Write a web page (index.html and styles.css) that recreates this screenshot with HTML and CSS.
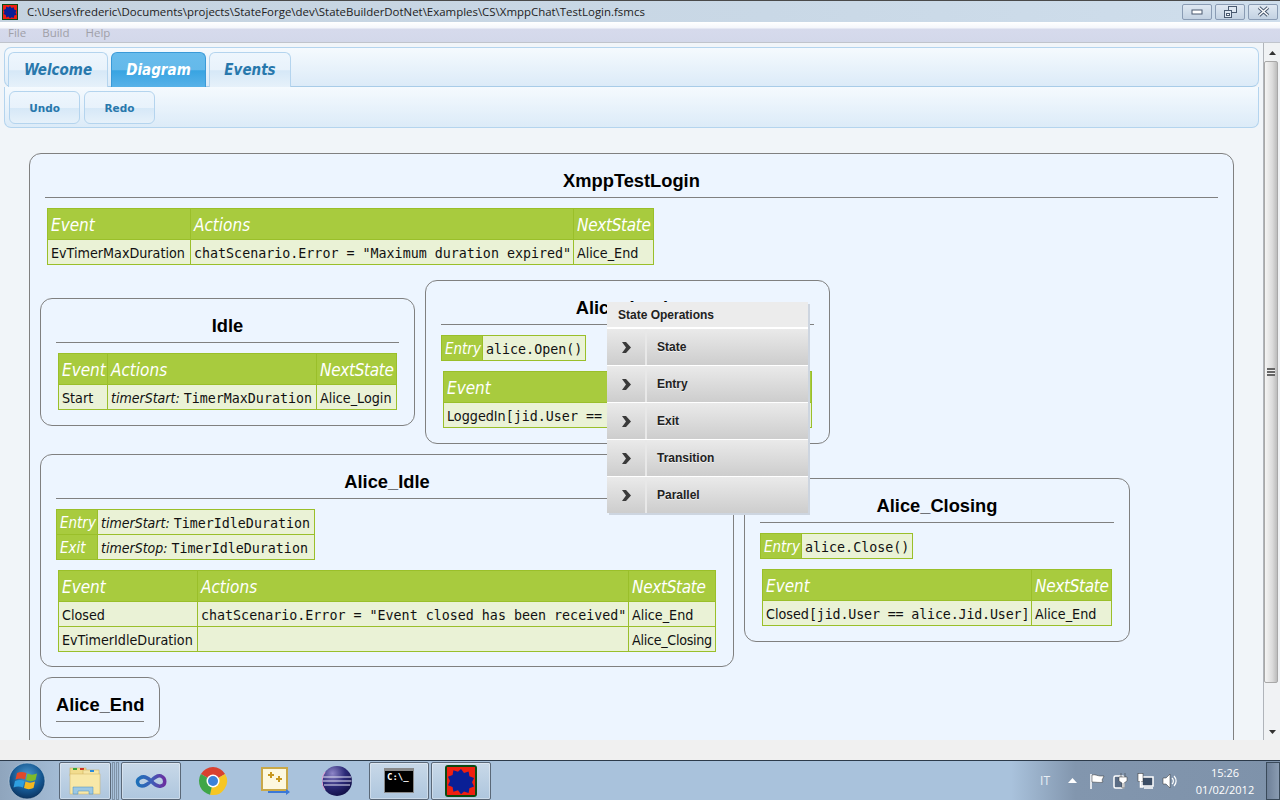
FILE: index.html
```html
<!DOCTYPE html>
<html lang="en">
<head>
    <meta charset="UTF-8">
    <title>StateForge</title>
    <link rel="stylesheet" href="styles.css">
</head>
<body>
    <div class="titlebar">
        <svg class="app-icon" width="16" height="16" viewBox="0 0 16 16">
            <rect width="16" height="16" fill="#0c4a12"/>
            <rect x="1" y="1" width="14" height="14" fill="#f02010"/>
            <path d="M8 2l1.500 2 2.300-.8.4 2.400 2.300.9-1 2.100 1 2.100-2.300.9-.4 2.400-2.300-.8L8 14.600l-1.500-2-2.300.8-.4-2.400-2.300-.9 1-2.100-1-2.100 2.300-.9.4-2.400 2.300.8z" fill="#0a1f96"/>
        </svg>
        <span class="title-text">C:\Users\frederic\Documents\projects\StateForge\dev\StateBuilderDotNet\Examples\CS\XmppChat\TestLogin.fsmcs</span>
        <div class="win-buttons">
            <div class="win-btn">
                <svg width="12" height="8" viewBox="0 0 12 8"><rect x="1" y="2" width="10" height="4" fill="#fff" stroke="#4a5a70"/></svg>
            </div>
            <div class="win-btn">
                <svg width="13" height="12" viewBox="0 0 13 12"><rect x="4.500" y="0.500" width="8" height="6" fill="#dfe8f2" stroke="#4a5a70"/><rect x="0.500" y="4.500" width="7" height="7" fill="#dfe8f2" stroke="#4a5a70"/><rect x="2.500" y="7.500" width="3" height="2" fill="#fff" stroke="#4a5a70"/></svg>
            </div>
            <div class="win-btn">
                <svg width="13" height="11" viewBox="0 0 13 11"><path d="M2 1.500l9 8M11 1.500l-9 8" stroke="#4a5a70" stroke-width="3.500" fill="none"/><path d="M2 1.500l9 8M11 1.500l-9 8" stroke="#fff" stroke-width="1.500" fill="none"/></svg>
            </div>
        </div>
    </div>
    <div class="menubar">
        <span>File</span>
        <span>Build</span>
        <span>Help</span>
    </div>

    <div class="workspace">
        <div class="main-col">
            <div class="tabbar">
                <div class="tab tab-welcome">Welcome</div>
                <div class="tab tab-diagram active">Diagram</div>
                <div class="tab tab-events">Events</div>
            </div>
            <div class="toolbar">
                <div class="tool-btn">Undo</div>
                <div class="tool-btn">Redo</div>
            </div>
            <div class="canvas">
                <div class="node node-main">
                    <div class="node-title">XmppTestLogin</div>
                    <table class="trans t-main">
                        <tr><th class="c1">Event</th><th class="c2">Actions</th><th class="c3">NextState</th></tr>
                        <tr><td>EvTimerMaxDuration</td><td class="code">chatScenario.Error = "Maximum duration expired"</td><td>Alice_End</td></tr>
                    </table>
                </div>

                <div class="node node-idle">
                    <div class="node-title">Idle</div>
                    <table class="trans t-idle">
                        <tr><th class="c1">Event</th><th class="c2">Actions</th><th class="c3">NextState</th></tr>
                        <tr><td>Start</td><td class="code"><i>timerStart: </i>TimerMaxDuration</td><td>Alice_Login</td></tr>
                    </table>
                </div>

                <div class="node node-login">
                    <div class="node-title">Alice_Login</div>
                    <table class="entry e-login">
                        <tr><th class="c1">Entry</th><td class="code">alice.Open()</td></tr>
                    </table>
                    <table class="trans t-login">
                        <tr><th class="c1">Event</th><th class="c3">NextState</th></tr>
                        <tr><td>LoggedIn<span class="code">[jid.User == alice.Jid.User]</span></td><td>Alice_Idle</td></tr>
                    </table>
                </div>

                <div class="node node-aidle">
                    <div class="node-title">Alice_Idle</div>
                    <table class="entry e-aidle">
                        <tr><th class="c1">Entry</th><td class="code"><i>timerStart: </i>TimerIdleDuration</td></tr>
                        <tr><th>Exit</th><td class="code"><i>timerStop: </i>TimerIdleDuration</td></tr>
                    </table>
                    <table class="trans t-aidle">
                        <tr><th class="c1">Event</th><th class="c2">Actions</th><th class="c3">NextState</th></tr>
                        <tr><td>Closed</td><td class="code">chatScenario.Error = "Event closed has been received"</td><td>Alice_End</td></tr>
                        <tr><td>EvTimerIdleDuration</td><td></td><td class="tight">Alice_Closing</td></tr>
                    </table>
                </div>

                <div class="node node-closing">
                    <div class="node-title">Alice_Closing</div>
                    <table class="entry e-closing">
                        <tr><th class="c1">Entry</th><td class="code">alice.Close()</td></tr>
                    </table>
                    <table class="trans t-closing">
                        <tr><th class="c1">Event</th><th class="c3">NextState</th></tr>
                        <tr><td>Closed<span class="code squeeze">[jid.User == alice.Jid.User]</span></td><td>Alice_End</td></tr>
                    </table>
                </div>

                <div class="node node-end">
                    <div class="node-title">Alice_End</div>
                </div>

                <div class="ctx-menu">
                    <div class="ctx-head">State Operations</div>
                    <div class="ctx-item"><span class="ctx-arrow"><svg width="10" height="11" viewBox="0 0 10 11"><path d="M1 0h4l5 5.500-5 5.500H1l4-5.500z" fill="#3a3a3a"/></svg></span><span class="ctx-label">State</span></div>
                    <div class="ctx-item"><span class="ctx-arrow"><svg width="10" height="11" viewBox="0 0 10 11"><path d="M1 0h4l5 5.500-5 5.500H1l4-5.500z" fill="#3a3a3a"/></svg></span><span class="ctx-label">Entry</span></div>
                    <div class="ctx-item"><span class="ctx-arrow"><svg width="10" height="11" viewBox="0 0 10 11"><path d="M1 0h4l5 5.500-5 5.500H1l4-5.500z" fill="#3a3a3a"/></svg></span><span class="ctx-label">Exit</span></div>
                    <div class="ctx-item"><span class="ctx-arrow"><svg width="10" height="11" viewBox="0 0 10 11"><path d="M1 0h4l5 5.500-5 5.500H1l4-5.500z" fill="#3a3a3a"/></svg></span><span class="ctx-label">Transition</span></div>
                    <div class="ctx-item"><span class="ctx-arrow"><svg width="10" height="11" viewBox="0 0 10 11"><path d="M1 0h4l5 5.500-5 5.500H1l4-5.500z" fill="#3a3a3a"/></svg></span><span class="ctx-label">Parallel</span></div>
                </div>
            </div>
        </div>
        <div class="scrollbar">
            <svg class="sb-arrow" width="7" height="4" viewBox="0 0 7 4"><path d="M3.500 0L7 4H0z" fill="#333"/></svg>
            <div class="sb-thumb"><div class="sb-grip"></div></div>
            <svg class="sb-arrow" width="7" height="4" viewBox="0 0 7 4"><path d="M0 0h7L3.500 4z" fill="#333"/></svg>
        </div>
    </div>
    <div class="statusbar"></div>

    <div class="taskbar">
        <div class="start">
            <svg width="38" height="38" viewBox="0 0 38 38">
                <defs>
                    <radialGradient id="orb" cx="50%" cy="35%" r="70%"><stop offset="0" stop-color="#4c9ad0"/><stop offset="0.6" stop-color="#14558f"/><stop offset="1" stop-color="#0a2c54"/></radialGradient>
                </defs>
                <circle cx="19" cy="19" r="18" fill="url(#orb)" stroke="#c8d8e6" stroke-opacity="0.6"/>
                <path d="M9 11c3-1.500 6-1.500 9.500 0l-1.500 6.500c-3-1.500-6-1.500-9.500 0z" fill="#e0492a"/>
                <path d="M19.500 11.500c3 1.500 6 1.500 9.500 0l-1.500 6.500c-3 1.500-6.500 1.500-9.500 0z" fill="#7fba2a"/>
                <path d="M7 19c3-1.500 6.500-1.500 9.500 0L15 25.500c-3-1.500-6.500-1.500-9.500 0z" fill="#2f9fe0"/>
                <path d="M17.500 19.500c3 1.500 6 1.500 9.500 0L25.500 26c-3 1.500-6.500 1.500-9.500 0z" fill="#f5b820"/>
            </svg>
        </div>
        <div class="task-btn btn-folder">
            <svg width="32" height="30" viewBox="0 0 32 30">
                <rect x="1" y="2" width="16" height="8" fill="#f2dc8e" stroke="#c8a850" stroke-width="0.500"/>
                <rect x="4" y="2" width="4" height="2" fill="#3aa53a"/>
                <rect x="11" y="2" width="4" height="2" fill="#d03020"/>
                <rect x="14" y="4" width="16" height="8" fill="#f6e6a6" stroke="#c8a850" stroke-width="0.500"/>
                <rect x="21" y="4" width="4" height="2" fill="#2b8ad8"/>
                <rect x="1" y="8" width="30" height="20" fill="#f8e8a8" stroke="#cfb060" stroke-width="0.500"/>
                <path d="M4 28v-7h20v7h-4v-3H9v3z" fill="#9cc8e4" stroke="#4a8cbc" stroke-width="0.500"/>
            </svg>
        </div>
        <div class="task-sep"></div>
        <div class="task-sep"></div>
        <div class="task-group">
            <div class="task-btn btn-vs">
                <svg width="32" height="18" viewBox="0 0 32 18">
                    <defs><linearGradient id="inf" x1="0" x2="1"><stop offset="0" stop-color="#1e6fb8"/><stop offset="0.5" stop-color="#3d5fb8"/><stop offset="1" stop-color="#6a2fa0"/></linearGradient></defs>
                    <path d="M16 9C12 5 8 4 5 6 1 8 2 14 7 14 11 14 13 12 16 9 19 6 22 3 26 4 31 6 31 13 26 14 22 15 19 12 16 9z" fill="none" stroke="url(#inf)" stroke-width="3.500"/>
                </svg>
            </div>
            <div class="task-icon first-icon">
                <svg width="30" height="30" viewBox="0 0 30 30">
                    <path d="M15 15L2.900 8A14 14 0 0 1 27.100 8z" fill="#d8412f"/>
                    <path d="M15 15L27.100 8A14 14 0 0 1 12 28.700z" fill="#f6c624"/>
                    <path d="M15 15L12 28.700A14 14 0 0 1 2.900 8z" fill="#3fa648"/>
                    <circle cx="15" cy="15" r="6.500" fill="#fff"/>
                    <circle cx="15" cy="15" r="5" fill="#3b82d8"/>
                </svg>
            </div>
            <div class="task-icon">
                <svg width="30" height="30" viewBox="0 0 30 30">
                    <rect x="2" y="2" width="25" height="22" fill="#fdf8e0" stroke="#c9a848" stroke-width="2"/>
                    <path d="M8 9h6M11 6v6M16 13h6M19 10v6" stroke="#c89820" stroke-width="2"/>
                    <path d="M8 25h18v-2l4 3-4 3v-2H8z" fill="#3a78d8"/>
                </svg>
            </div>
            <div class="task-icon">
                <svg width="30" height="30" viewBox="0 0 30 30">
                    <defs><radialGradient id="ecl" cx="35%" cy="25%" r="85%"><stop offset="0" stop-color="#8e86c8"/><stop offset="0.5" stop-color="#2c2a78"/><stop offset="1" stop-color="#0e0c40"/></radialGradient></defs>
                    <circle cx="15" cy="15" r="15" fill="url(#ecl)"/>
                    <path d="M3 6A15 15 0 0 0 3 24" fill="none" stroke="#e8a8d8"/>
                    <path d="M1 11h28M0.500 15h29M2 19h26" stroke="#e4e4f4" stroke-width="1"/>
                </svg>
            </div>
            <div class="task-btn btn-cmd">
                <div class="cmd-icon"><span>C:\_</span></div>
            </div>
            <div class="task-btn btn-app">
                <svg width="32" height="32" viewBox="0 0 16 16">
                    <rect width="16" height="16" rx="1.500" fill="#0c4a12"/>
                    <rect x="1" y="1" width="14" height="14" fill="#f02010"/>
                    <path d="M8 2l1.500 2 2.300-.8.4 2.400 2.300.9-1 2.100 1 2.100-2.300.9-.4 2.400-2.300-.8L8 14.600l-1.500-2-2.300.8-.4-2.400-2.300-.9 1-2.100-1-2.100 2.300-.9.4-2.400 2.300.8z" fill="#0a1f96"/>
                </svg>
            </div>
        </div>
        <div class="tray">
            <span class="lang">IT</span>
            <svg width="9" height="5" viewBox="0 0 9 5"><path d="M4.500 0L9 5H0z" fill="#fff"/></svg>
            <svg class="tray-flag" width="16" height="16" viewBox="0 0 16 16"><path d="M2 1v15" stroke="#fff" stroke-width="1.500"/><path d="M3 2c3-1 6 1 8 1l4 0-2 4 1 2c-3 1-7 0-11 0z" fill="#fff" stroke="#333" stroke-width="0.500"/></svg>
            <svg width="16" height="16" viewBox="0 0 16 16"><rect x="1" y="3" width="10" height="12" rx="1.500" fill="#5a6c84" stroke="#fff" stroke-width="1.500"/><path d="M8 0v4M12 0v4M6 4h8v4l-3 2v5h-2v-5L6 8z" fill="#fff" stroke="#333" stroke-width="0.500"/></svg>
            <svg width="17" height="16" viewBox="0 0 17 16"><rect x="5" y="4" width="11" height="9" fill="#3c4e66" stroke="#fff" stroke-width="1.500"/><path d="M7 15h9" stroke="#fff" stroke-width="1.500"/><rect x="1" y="0.500" width="5" height="8" fill="#fff" stroke="#333" stroke-width="0.500"/><path d="M3.500 8v6h3" stroke="#fff" stroke-width="1.500" fill="none"/></svg>
            <svg width="16" height="16" viewBox="0 0 16 16"><path d="M1 5h3l4-4v14l-4-4H1z" fill="#fff" stroke="#333" stroke-width="0.500"/><path d="M10 5a4 4 0 0 1 0 6M12 3a7 7 0 0 1 0 10" stroke="#fff" stroke-width="1.200" fill="none"/></svg>
            <div class="clock"><div>15:26</div><div>01/02/2012</div></div>
        </div>
        <div class="show-desktop"></div>
    </div>
</body>
</html>
```

FILE: styles.css
```css
html, body {
    margin: 0;
    padding: 0;
    height: 800px;
    overflow: hidden;
}
body {
    font-family: "Liberation Sans", Arial, sans-serif;
    display: flex;
    flex-direction: column;
    background: #f0f0f0;
}

/* window chrome */
.titlebar {
    height: 22px;
    box-sizing: border-box;
    flex: none;
    display: flex;
    align-items: center;
    border-top: 1px solid #4a4a4a;
    background: linear-gradient(90deg, #c5d3e0, #c9d8e6 60%, #cfdeec);
}
.app-icon {
    margin-left: 2px;
}
.title-text {
    margin-left: 9px;
    font-family: "Open Sans", sans-serif;
    font-size: 11.440px;
    color: #222;
    white-space: nowrap;
}
.win-buttons {
    margin-left: auto;
    margin-right: 2px;
    display: flex;
    gap: 3px;
}
.win-btn {
    width: 30px;
    height: 16px;
    box-sizing: border-box;
    border: 1px solid #8a9cb4;
    border-radius: 2px;
    background: linear-gradient(#dfe8f2, #c3d2e2);
    display: flex;
    align-items: center;
    justify-content: center;
}
.menubar {
    height: 21px;
    flex: none;
    display: flex;
    align-items: center;
    padding-left: 8px;
    gap: 16px;
    font-family: "Open Sans", sans-serif;
    font-size: 11.500px;
    color: #a0a0a8;
    background: linear-gradient(#fff 0, #f4f6fb 6px, #d6daec 7px, #d3d8ea);
    border-bottom: 1px solid #c0c4cc;
    box-sizing: border-box;
}

.workspace {
    height: 697px;
    flex: none;
    display: flex;
}
.main-col {
    flex: 1;
    min-width: 0;
    display: flex;
    flex-direction: column;
    background: #f1f5f9;
    border-right: 1px solid #b0b4ba;
}

/* tabs and toolbar */
.tabbar {
    margin: 4px 4px 0 4px;
    height: 40px;
    box-sizing: border-box;
    display: flex;
    gap: 3px;
    padding: 4px 0 0 3px;
    border: 1px solid #b4d4ee;
    border-bottom-color: #a8cce8;
    border-radius: 7px;
    background: linear-gradient(#f5fafe, #dcebf8);
}
.tab {
    height: 35px;
    display: flex;
    align-items: center;
    justify-content: center;
    box-sizing: border-box;
    border: 1px solid #b4d4ee;
    border-bottom: none;
    border-radius: 6px 6px 0 0;
    background: linear-gradient(#eef6fd 0, #e8f2fb 50%, #d6e8f7 52%, #e6f1fa);
    color: #2878ac;
    font: italic bold 15px "DejaVu Sans Condensed", "DejaVu Sans", sans-serif;
}
.tab-welcome { width: 100px; }
.tab-diagram { width: 95px; }
.tab-events { width: 82px; }
.tab.active {
    background: linear-gradient(#68bcec 0, #64b9ea 50%, #38a4e2 52%, #58b2e8);
    border-color: #3a9ad8;
    color: #fff;
}
.toolbar {
    margin: 0 4px;
    height: 41px;
    box-sizing: border-box;
    display: flex;
    gap: 4px;
    padding: 4px 4px;
    border: 1px solid #b4d4ee;
    border-top: none;
    border-radius: 0 0 7px 7px;
    background: linear-gradient(#f5fafe, #dcebf8);
}
.tool-btn {
    width: 71px;
    height: 33px;
    box-sizing: border-box;
    border: 1px solid #b4d4ee;
    border-radius: 6px;
    display: flex;
    align-items: center;
    justify-content: center;
    background: linear-gradient(#eef6fd 0, #e8f2fb 50%, #d6e8f7 52%, #e6f1fa);
    color: #2878ac;
    font: bold 10.500px "DejaVu Sans", sans-serif;
}

/* diagram, the nodes sit on a free canvas */
.canvas {
    flex: 1;
    position: relative;
    overflow: hidden;
}
.node {
    position: absolute;
    box-sizing: border-box;
    border: 1px solid #808080;
    border-radius: 12px;
    padding: 0 15px;
    background: #edf5ff;
}
.node-main { left: 29px; top: 25px; width: 1205px; height: 700px; }
.node-idle { left: 40px; top: 170px; width: 375px; height: 128px; }
.node-login { left: 425px; top: 152px; width: 405px; height: 164px; }
.node-aidle { left: 40px; top: 326px; width: 694px; height: 213px; }
.node-closing { left: 744px; top: 350px; width: 386px; height: 164px; }
.node-end { left: 40px; top: 549px; width: 120px; height: 61px; }

.node-title {
    height: 44px;
    box-sizing: border-box;
    padding-top: 16px;
    line-height: 22px;
    text-align: center;
    font-size: 18.300px;
    font-weight: bold;
    color: #000;
    border-bottom: 1px solid #808080;
    white-space: nowrap;
}
table {
    border-collapse: collapse;
    table-layout: fixed;
    margin: 10px 0 0 0;
    font-family: "DejaVu Sans Condensed", "DejaVu Sans", sans-serif;
    font-size: 14.200px;
    color: #111;
}
th, td {
    box-sizing: border-box;
    border: 1px solid #9abf2a;
    padding: 2px 3px 0 3px;
    white-space: nowrap;
    overflow: hidden;
    text-align: left;
}
th {
    background: #a8cb3e;
    color: #fff;
    font-weight: normal;
    font-style: italic;
}
td {
    background: #eaf2d6;
    height: 25px;
}
.code {
    font-family: "DejaVu Sans Mono", monospace;
    font-size: 13.330px;
}
.code i {
    font-family: "DejaVu Sans Condensed", "DejaVu Sans", sans-serif;
    font-size: 14px;
}
.squeeze {
    letter-spacing: -0.150px;
}
.tight {
    letter-spacing: -0.300px;
}

.trans {
    margin-left: 2px;
}
.trans th {
    height: 31px;
    font-size: 17px;
}
.trans .c3 {
    letter-spacing: -0.300px;
}
.entry th {
    font-size: 15px;
}
.entry .c1 { width: 41px; }

.t-main { width: 607px; }
.t-main .c1 { width: 143px; }
.t-main .c2 { width: 383px; }
.t-idle { width: 339px; }
.t-idle .c1 { width: 49px; }
.t-idle .c2 { width: 209px; }
.t-login { width: 369px; }
.t-login .c3 { width: 79px; }
.t-aidle { width: 658px; }
.t-aidle .c1 { width: 139px; }
.t-aidle .c2 { width: 431px; }
.t-closing { width: 350px; }
.t-closing .c3 { width: 80px; }
.e-login { width: 145px; }
.e-aidle { width: 259px; }
.e-closing { width: 153px; }

/* popup menu */
.ctx-menu {
    position: absolute;
    left: 607px;
    top: 174px;
    width: 201px;
    box-shadow: 2px 2px 0 #cdd5e0;
    font-size: 12px;
    font-weight: bold;
    color: #222;
}
.ctx-head {
    height: 26px;
    line-height: 26px;
    padding-left: 11px;
    background: #ececec;
    border-bottom: 1px solid #fff;
    box-sizing: border-box;
}
.ctx-item {
    height: 37px;
    box-sizing: border-box;
    display: flex;
    align-items: center;
    border-top: 1px solid #fff;
    background: linear-gradient(#eaeaea, #cdcdcd);
}
.ctx-arrow {
    width: 40px;
    height: 100%;
    box-sizing: border-box;
    display: flex;
    align-items: center;
    justify-content: center;
    border-right: 2px solid #e8e8e8;
}
.ctx-label {
    margin-left: 10px;
    color: #222;
    text-shadow: 0 1px 0 rgba(255, 255, 255, 0.700);
}

/* scrollbar */
.scrollbar {
    width: 16px;
    flex: none;
    display: flex;
    flex-direction: column;
    align-items: center;
    justify-content: space-between;
    padding: 8px 0 6px 0;
    box-sizing: border-box;
    background: #f0f2f4;
    position: relative;
}
.sb-thumb {
    position: absolute;
    left: 0;
    top: 18px;
    width: 14px;
    height: 622px;
    box-sizing: border-box;
    border: 1px solid #a8a8a8;
    border-radius: 2px;
    background: linear-gradient(90deg, #f4f4f4, #dcdcdc 60%, #bcbcbc);
    display: flex;
    align-items: center;
    justify-content: center;
}
.sb-grip {
    width: 8px;
    height: 8px;
    background: repeating-linear-gradient(#666 0, #666 2px, #eee 2px, #eee 3px);
}

/* bottom */
.statusbar {
    height: 20px;
    flex: none;
    background: #f0f0f0;
}
.taskbar {
    height: 40px;
    flex: none;
    display: flex;
    align-items: center;
    box-sizing: border-box;
    border-top: 1px solid #2c3a4a;
    background: linear-gradient(90deg, #8fa5bd 0, #a9c2dc 6%, #a9c2dc 79%, #8296ae 84%, #7e92aa);
}
.start {
    width: 59px;
    flex: none;
    display: flex;
    box-sizing: border-box;
    padding-left: 8px;
}
.task-btn {
    height: 38px;
    box-sizing: border-box;
    border: 1px solid #5a6878;
    border-radius: 2px;
    background: linear-gradient(#c8d8e8, #aec6de);
    box-shadow: inset 0 0 0 1px rgba(255, 255, 255, 0.350);
    display: flex;
    align-items: center;
    justify-content: center;
}
.btn-folder { width: 52px; }
.task-sep {
    width: 3px;
    height: 38px;
    margin-left: 1px;
    border: 1px solid #7f93a8;
    box-sizing: border-box;
}
.task-group {
    display: flex;
    align-items: center;
    margin-left: 2px;
}
.btn-vs { width: 60px; }
.task-icon {
    width: 62px;
    display: flex;
    justify-content: center;
}
.first-icon { margin-left: 1px; }
.btn-cmd { width: 60px; margin-left: 1px; }
.btn-app { width: 60px; margin-left: 2px; }
.cmd-icon {
    width: 30px;
    height: 25px;
    box-sizing: border-box;
    background: #000;
    border: 1px solid #888;
    border-top-width: 3px;
    color: #fff;
    font: bold 9px/12px "DejaVu Sans Mono", monospace;
    padding-left: 2px;
}
.tray {
    margin-left: auto;
    display: flex;
    align-items: center;
    gap: 8px;
    color: #fff;
    font-family: "Open Sans", sans-serif;
    font-size: 11px;
}
.lang { margin-right: 10px; color: #e8eef4; font-size: 12px; }
.tray-flag { margin-left: 4px; }
.clock {
    margin-left: 9px;
    width: 60px;
    text-align: center;
    line-height: 17px;
}
.show-desktop {
    width: 14px;
    height: 38px;
    margin-left: 11px;
    box-sizing: border-box;
    border: 1px solid #3a4a5a;
    background: linear-gradient(90deg, #6e8098, #8a9cb2);
}
```
